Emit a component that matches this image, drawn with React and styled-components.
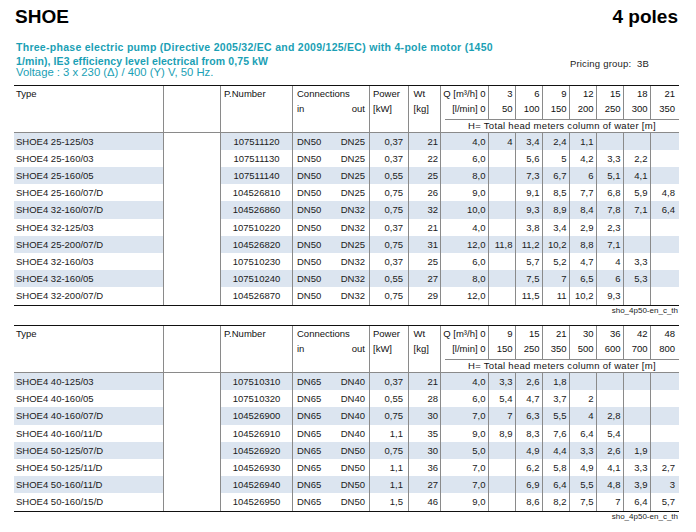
import React from 'react';
import styled, { createGlobalStyle } from 'styled-components';

const COLS = '149px 57px 72px 77px 39px 32px 48px repeat(6, 27px) 29px';
const LINE = '#8a8a8a';
const STRIPE = '#dce5f0';

const Global = createGlobalStyle`
  html, body { margin: 0; padding: 0; background: #fff; }
  body { font-family: "Liberation Sans", Arial, Helvetica, sans-serif; color: #1a1a1a; }
`;

const Page = styled.div`
  width: 665px;
  padding: 6px 0 0 14px;
`;

const TitleRow = styled.div`
  display: flex;
  justify-content: space-between;
  align-items: flex-start;
  height: 22px;
  line-height: 22px;
  font-size: 19px;
  font-weight: bold;
  color: #000;
  padding: 0 1px 0 1px;
`;

const Intro = styled.div`
  display: flex;
  justify-content: space-between;
  align-items: flex-start;
  margin-top: 11.7px;
  padding-left: 2px;
`;

const Lead = styled.div`
  color: #1a9fb5;
`;

const LeadBold = styled.div`
  font-size: 10.5px;
  letter-spacing: ${(p) => p.$ls}px;
  font-weight: bold;
  line-height: 14px;
  white-space: nowrap;
`;

const Voltage = styled.div`
  font-size: 11.3px;
  line-height: 12px;
  margin-top: -2px;
  white-space: nowrap;
`;

const Pricing = styled.div`
  font-size: 9.5px;
  letter-spacing: 0.2px;
  line-height: 12px;
  margin-top: 18.8px;
  margin-right: 30px;
  color: #222;
  white-space: pre;
`;

const Table = styled.div`
  margin-top: ${(p) => p.$top}px;
  border-top: 1px solid #111;
  border-bottom: 1.5px solid #111;
  font-size: 9.5px;
`;

const Head = styled.div`
  display: grid;
  grid-template-columns: ${COLS};
  grid-template-rows: 15px 18px 13px;
  border-bottom: 1px solid ${LINE};
  line-height: 15px;
  color: #111;
`;

const HCell = styled.div`
  grid-column: ${(p) => p.$col};
  grid-row: ${(p) => p.$rows || '1 / 4'};
  border-left: ${(p) => (p.$line ? `1px solid ${LINE}` : 'none')};
  text-align: ${(p) => p.$align || 'left'};
  padding: ${(p) => p.$pad || '0'};
  white-space: nowrap;
  overflow: hidden;
`;

const ConnSplit = styled.div`
  display: flex;
  justify-content: space-between;
`;

const HBand = styled.div`
  grid-column: 7 / 15;
  grid-row: 3;
  border-left: 1px solid ${LINE};
`;

const HLabel = styled.div`
  margin-left: 4px;
  border-top: 1px solid ${LINE};
  line-height: 12px;
  text-align: center;
  white-space: nowrap;
  letter-spacing: 0.3px;
`;

const Row = styled.div`
  display: grid;
  grid-template-columns: ${COLS};
  height: 17.2px;
  line-height: 17.2px;
`;

const Cell = styled.div`
  background: ${(p) => (p.$stripe ? STRIPE : 'transparent')};
  border-left: ${(p) => (p.$line ? `1px solid ${LINE}` : 'none')};
  text-align: ${(p) => p.$align || 'right'};
  padding: ${(p) => p.$pad || '0 2.5px 0 0'};
  white-space: nowrap;
  overflow: hidden;
`;

const Note = styled.div`
  font-size: 8px;
  line-height: 10px;
  text-align: right;
  padding-right: 1px;
  color: #222;
`;

const table1 = {
  q: ['3', '6', '9', '12', '15', '18', '21'],
  l: ['50', '100', '150', '200', '250', '300', '350'],
  rows: [
    ['SHOE4 25-125/03', '107511120', 'DN50', 'DN25', '0,37', '21', '4,0', ['4', '3,4', '2,4', '1,1', '', '', '']],
    ['SHOE4 25-160/03', '107511130', 'DN50', 'DN25', '0,37', '22', '6,0', ['', '5,6', '5', '4,2', '3,3', '2,2', '']],
    ['SHOE4 25-160/05', '107511140', 'DN50', 'DN25', '0,55', '25', '8,0', ['', '7,3', '6,7', '6', '5,1', '4,1', '']],
    ['SHOE4 25-160/07/D', '104526810', 'DN50', 'DN25', '0,75', '26', '9,0', ['', '9,1', '8,5', '7,7', '6,8', '5,9', '4,8']],
    ['SHOE4 32-160/07/D', '104526860', 'DN50', 'DN32', '0,75', '32', '10,0', ['', '9,3', '8,9', '8,4', '7,8', '7,1', '6,4']],
    ['SHOE4 32-125/03', '107510220', 'DN50', 'DN32', '0,37', '21', '4,0', ['', '3,8', '3,4', '2,9', '2,3', '', '']],
    ['SHOE4 25-200/07/D', '104526820', 'DN50', 'DN25', '0,75', '31', '12,0', ['11,8', '11,2', '10,2', '8,8', '7,1', '', '']],
    ['SHOE4 32-160/03', '107510230', 'DN50', 'DN32', '0,37', '25', '6,0', ['', '5,7', '5,2', '4,7', '4', '3,3', '']],
    ['SHOE4 32-160/05', '107510240', 'DN50', 'DN32', '0,55', '27', '8,0', ['', '7,5', '7', '6,5', '6', '5,3', '']],
    ['SHOE4 32-200/07/D', '104526870', 'DN50', 'DN32', '0,75', '29', '12,0', ['', '11,5', '11', '10,2', '9,3', '', '']],
  ],
};

const table2 = {
  q: ['9', '15', '21', '30', '36', '42', '48'],
  l: ['150', '250', '350', '500', '600', '700', '800'],
  rows: [
    ['SHOE4 40-125/03', '107510310', 'DN65', 'DN40', '0,37', '21', '4,0', ['3,3', '2,6', '1,8', '', '', '', '']],
    ['SHOE4 40-160/05', '107510320', 'DN65', 'DN40', '0,55', '28', '6,0', ['5,4', '4,7', '3,7', '2', '', '', '']],
    ['SHOE4 40-160/07/D', '104526900', 'DN65', 'DN40', '0,75', '30', '7,0', ['7', '6,3', '5,5', '4', '2,8', '', '']],
    ['SHOE4 40-160/11/D', '104526910', 'DN65', 'DN40', '1,1', '35', '9,0', ['8,9', '8,3', '7,6', '6,4', '5,4', '', '']],
    ['SHOE4 50-125/07/D', '104526920', 'DN65', 'DN50', '0,75', '30', '5,0', ['', '4,9', '4,4', '3,3', '2,6', '1,9', '']],
    ['SHOE4 50-125/11/D', '104526930', 'DN65', 'DN50', '1,1', '36', '7,0', ['', '6,2', '5,8', '4,9', '4,1', '3,3', '2,7']],
    ['SHOE4 50-160/11/D', '104526940', 'DN65', 'DN50', '1,1', '27', '7,0', ['', '6,9', '6,4', '5,5', '4,8', '3,9', '3']],
    ['SHOE4 50-160/15/D', '104526950', 'DN65', 'DN50', '1,5', '46', '9,0', ['', '8,6', '8,2', '7,5', '7', '6,4', '5,7']],
  ],
};

function PumpTable({ data, top }) {
  return (
    <Table $top={top}>
      <Head>
        <HCell $col={1} $pad="0 0 0 2px">Type</HCell>
        <HCell $col={2} $line />
        <HCell $col={3} $line $pad="0 0 0 3px">P.Number</HCell>
        <HCell $col={4} $line $pad="0 4px 0 4px">
          <div>Connections</div>
          <ConnSplit>
            <span>in</span>
            <span>out</span>
          </ConnSplit>
        </HCell>
        <HCell $col={5} $line $pad="0 0 0 3px">
          <div>Power</div>
          <div>[kW]</div>
        </HCell>
        <HCell $col={6} $line $pad="0 0 0 4.5px">
          <div>Wt</div>
          <div>[kg]</div>
        </HCell>
        <HCell $col={7} $rows="1 / 3" $line $align="right" $pad="0 2.5px 0 0">
          <div>Q [m³/h] 0</div>
          <div>[l/min] 0</div>
        </HCell>
        {data.q.map((q, i) => (
          <HCell
            key={q}
            $col={8 + i}
            $rows="1 / 3"
            $line
            $align="right"
            $pad={i === 6 ? '0 4px 0 0' : '0 2.5px 0 0'}
          >
            <div>{q}</div>
            <div>{data.l[i]}</div>
          </HCell>
        ))}
        <HBand>
          <HLabel>H= Total head meters column of water [m]</HLabel>
        </HBand>
      </Head>
      {data.rows.map((r, idx) => {
        const s = idx % 2 === 0;
        const [type, pn, cin, cout, pw, wt, q0, vals] = r;
        return (
          <Row key={type}>
            <Cell $stripe={s} $align="left" $pad="0 0 0 2px">{type}</Cell>
            <Cell $line />
            <Cell $stripe={s} $line $align="center" $pad="0">{pn}</Cell>
            <Cell $stripe={s} $line $align="left" $pad="0 4px 0 4px">
              <ConnSplit>
                <span>{cin}</span>
                <span>{cout}</span>
              </ConnSplit>
            </Cell>
            <Cell $stripe={s} $line $pad="0 5px 0 0">{pw}</Cell>
            <Cell $stripe={s} $line $pad="0 2px 0 0">{wt}</Cell>
            <Cell $stripe={s} $line>{q0}</Cell>
            {vals.map((v, i) => (
              <Cell key={i} $stripe={s} $line $pad={i === 6 ? '0 4px 0 0' : '0 2.5px 0 0'}>
                {v}
              </Cell>
            ))}
          </Row>
        );
      })}
    </Table>
  );
}

export default function App() {
  return (
    <>
      <Global />
      <Page>
        <TitleRow>
          <span>SHOE</span>
          <span>4 poles</span>
        </TitleRow>
        <Intro>
          <Lead>
            <LeadBold $ls={0.28}>Three-phase electric pump (Directive 2005/32/EC and 2009/125/EC) with 4-pole motor (1450</LeadBold>
            <LeadBold $ls={0.1}>1/min), IE3 efficiency level electrical from 0,75 kW</LeadBold>
            <Voltage>Voltage : 3 x 230 (Δ) / 400 (Y) V, 50 Hz.</Voltage>
          </Lead>
          <Pricing>Pricing group:  3B</Pricing>
        </Intro>
        <PumpTable data={table1} top={7} />
        <Note>sho_4p50-en_c_th</Note>
        <PumpTable data={table2} top={9.5} />
        <Note>sho_4p50-en_c_th</Note>
      </Page>
    </>
  );
}
